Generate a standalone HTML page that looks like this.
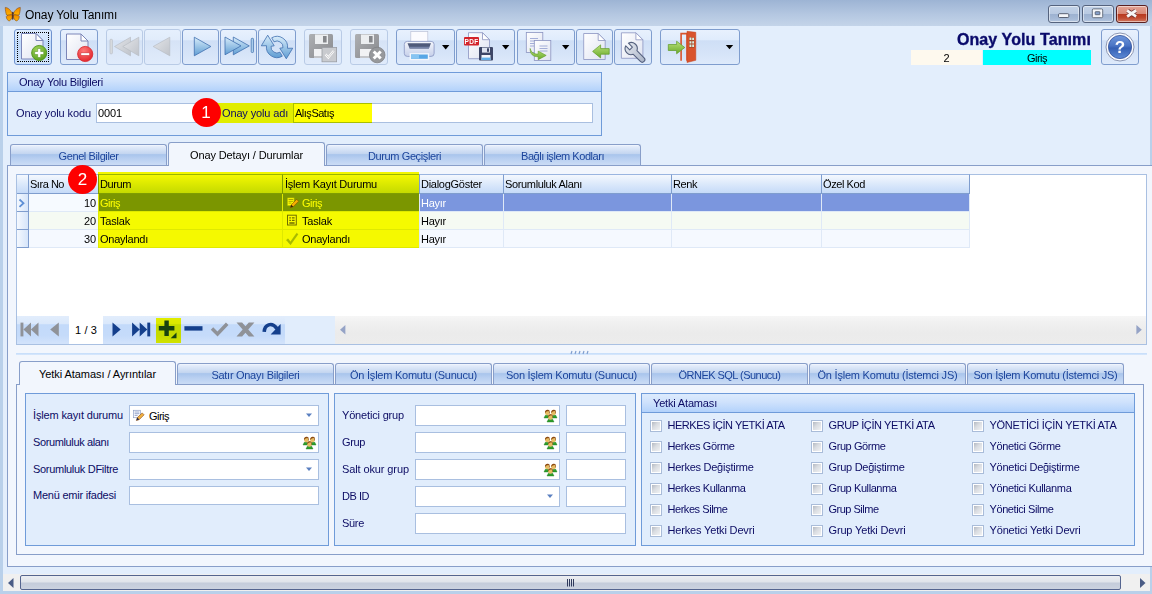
<!DOCTYPE html>
<html lang="tr">
<head>
<meta charset="utf-8">
<title>Onay Yolu Tanımı</title>
<style>
html,body{margin:0;padding:0}
body{width:1152px;height:594px;overflow:hidden;position:relative;background:#e3eefc;font:11px "Liberation Sans",sans-serif;color:#000}
.a{position:absolute;box-sizing:border-box}
.t{position:absolute;white-space:nowrap;line-height:13px;height:13px;letter-spacing:-.3px}
.nv{color:#0c0c64}
.tl{white-space:nowrap}
.bl{color:#1c449b}
/* window frame */
#titlebar{left:0;top:0;width:1152px;height:26px;background:linear-gradient(#9db4d4,#b4c7e1 55%,#c4d4e9)}
#bl{left:0;top:26px;width:3px;height:568px;background:#b9d0ea}
#br{left:1150px;top:26px;width:2px;height:568px;background:#b9d0ea}
#bb{left:0;top:591px;width:1152px;height:3px;background:#b9d0ea}
.wbtn{top:5px;height:18px;border:1px solid #55637e;border-radius:3px;background:linear-gradient(#c3d2e7,#b9cae2 48%,#9db2d1 52%,#a6bad7 80%,#b4c6df);box-shadow:inset 0 0 0 1px rgba(255,255,255,.5)}
/* toolbar buttons */
.tb{top:29px;height:36px;border:1px solid #7f9dce;border-radius:3px;background:linear-gradient(#e8f1fd,#e0ecfc 28%,#cfdff6 32%,#d6e4f8 70%,#deeafb)}
.tb.dis{border-color:#b9cbe6;background:linear-gradient(#e6f0fd,#e1ecfb 28%,#d6e3f6 32%,#dce8f9 70%,#e0ebfb)}
/* group boxes */
.grp{border:1px solid #6f9bd9;background:#e1edfc}
.ghd{left:0;top:0;right:0;height:19px;border-bottom:1px solid #6f9bd9;background:linear-gradient(#ddebfd,#cfe2fc 45%,#b3d2fb)}
.inp{background:#fff;border:1px solid #a9bfe0;height:20px}
/* tabs */
.tab{border:1px solid #889ec9;border-bottom:none;border-radius:3px 3px 0 0;background:linear-gradient(#f4f8fe,#e3ecfa 8%,#c3d5f0 44%,#a9c5ec 48%,#b9d0f1 70%,#cbdcf5);text-align:center;color:#1c449b;line-height:23px;letter-spacing:-.3px}
.tab.act{background:#f2f6fd;color:#000;border-color:#889ec9}
.pnl{border:1px solid #889ec9;background:#f2f6fd}
/* grid */
.hd{top:174px;height:20px;border-right:1px solid #7f9dce;border-bottom:1px solid #7f9dce;border-top:1px solid #9ab5e0;background:linear-gradient(#f4f8fe,#dce9fb 50%,#c5daf8);}
.cell{height:18px;border-right:1px solid #dbe6f5;border-bottom:1px solid #dbe6f5}
.cb{width:12px;height:12px;border:1px solid #a9bcd9;background:linear-gradient(135deg,#a9afb9,#d9dce1 45%,#f6f7f8);box-shadow:inset 0 0 0 1px #fff}
</style>
</head>
<body>
<!-- WINDOW FRAME -->
<div class="a" id="titlebar"></div>
<div class="a" id="bl"></div><div class="a" id="br"></div><div class="a" id="bb"></div>
<span class="t" style="left:25px;top:8px;font-size:12px;line-height:14px;height:14px;letter-spacing:-.1px">Onay Yolu Tanımı</span>
<svg class="a" style="left:0;top:0" width="30" height="26" viewBox="0 0 30 26">
<defs><linearGradient id="gbf" x1="0" y1="0" x2="0" y2="1"><stop offset="0" stop-color="#ef8a00"/><stop offset="1" stop-color="#ffb300"/></linearGradient></defs>
<g fill="url(#gbf)" stroke="#7a3c08" stroke-width=".5">
<path d="M12.300 14C11.200 10.500 8.300 7.600 5.300 7.400C5.200 10 5.800 13 6.500 15C8.500 15.600 10.800 15.300 12.300 14z"/>
<path d="M12.300 15C9.500 14.600 6.800 15.200 6.300 16.500C6.300 19 7.800 20.800 9.300 20.900C11 20.300 12.100 18 12.300 16z"/>
<path d="M13.300 14C14.400 10.500 17.300 7.600 20.300 7.400C20.400 10 19.800 13 19.100 15C17.100 15.600 14.800 15.300 13.300 14z"/>
<path d="M13.300 15C16.100 14.600 18.800 15.200 19.300 16.500C19.300 19 17.800 20.800 16.300 20.900C14.600 20.300 13.500 18 13.300 16z"/>
</g>
<path d="M12.800 12.500v6.500" stroke="#4a2410" stroke-width="1.300" stroke-linecap="round"/>
</svg>
<div class="a wbtn" style="left:1048px;width:32px"></div>
<div class="a wbtn" style="left:1082px;width:32px"></div>
<div class="a wbtn" style="left:1116px;width:32px;background:linear-gradient(#e3a495,#d98876 48%,#b8391f 52%,#c04a30 75%,#d27a62);border-color:#5a2020"></div>
<svg class="a" style="left:1048px;top:5px" width="100" height="18" viewBox="1048 5 100 18">
<rect x="1058.500" y="13.700" width="10.300" height="3.800" rx="1" fill="#f4f6fa" stroke="#4d5566" stroke-width=".9"/>
<rect x="1092.300" y="8.900" width="10.400" height="8.800" rx="1.200" fill="#f4f6fa" stroke="#4d5566" stroke-width=".8"/>
<rect x="1095.200" y="11.700" width="4.700" height="3" rx=".4" fill="#86a0cc" stroke="#4d5566" stroke-width=".8"/>
<path d="M1127.600 10.800l8 5.400m0-5.400l-8 5.400" stroke="#6a3030" stroke-width="4.400"/>
<path d="M1128.300 11.300l6.600 4.400m0-4.400l-6.600 4.400" stroke="#f6f6f6" stroke-width="2.800" stroke-linecap="square"/>
</svg>
<!-- TOOLBAR BUTTONS -->
<div class="a tb" style="left:14px;width:38px;border-color:#6f93cf;background:linear-gradient(#dcebfd,#d4e6fc 28%,#bfd9fa 32%,#c6ddfa 70%,#d0e3fb)"></div>
<div class="a" style="left:17px;top:32px;width:32px;height:30px;border:1px dotted #000"></div>
<div class="a tb" style="left:60px;width:38px"></div>
<div class="a tb dis" style="left:106px;width:37px"></div>
<div class="a tb dis" style="left:144px;width:37px"></div>
<div class="a tb" style="left:182px;width:37px"></div>
<div class="a tb" style="left:220px;width:37px"></div>
<div class="a tb" style="left:258px;width:38px"></div>
<div class="a tb dis" style="left:304px;width:38px"></div>
<div class="a tb dis" style="left:350px;width:38px"></div>
<div class="a tb" style="left:396px;width:59px"></div>
<div class="a tb" style="left:456px;width:59px"></div>
<div class="a tb" style="left:517px;width:58px"></div>
<div class="a tb" style="left:576px;width:37px"></div>
<div class="a tb" style="left:614px;width:38px"></div>
<div class="a tb" style="left:660px;width:80px"></div>
<svg class="a" style="left:0;top:26px" width="760" height="44" viewBox="0 26 760 44">
<defs>
<linearGradient id="gdoc" x1="0" y1="0" x2="1" y2="1"><stop offset="0" stop-color="#ffffff"/><stop offset="1" stop-color="#dfe3f1"/></linearGradient>
<linearGradient id="gtri" x1="0" y1="0" x2="0" y2="1"><stop offset="0" stop-color="#d8ecfa"/><stop offset="1" stop-color="#5f9dd3"/></linearGradient>
<linearGradient id="gtrd" x1="0" y1="0" x2="1" y2="1"><stop offset="0" stop-color="#e4e6ea"/><stop offset="1" stop-color="#bfc3ca"/></linearGradient>
<radialGradient id="ggrn" cx=".4" cy=".3" r=".8"><stop offset="0" stop-color="#a5d65a"/><stop offset="1" stop-color="#4f9a18"/></radialGradient>
<radialGradient id="gred" cx=".4" cy=".3" r=".8"><stop offset="0" stop-color="#ff7a7a"/><stop offset="1" stop-color="#e01d25"/></radialGradient>
<linearGradient id="garr" x1="0" y1="0" x2="0" y2="1"><stop offset="0" stop-color="#b9e17a"/><stop offset="1" stop-color="#6aaa2a"/></linearGradient>
<linearGradient id="gflp" x1="0" y1="0" x2="1" y2="1"><stop offset="0" stop-color="#aeb0b3"/><stop offset="1" stop-color="#88898d"/></linearGradient>
<linearGradient id="gprn" x1="0" y1="0" x2="0" y2="1"><stop offset="0" stop-color="#f4f6fc"/><stop offset="1" stop-color="#c6d0ea"/></linearGradient>
<linearGradient id="gwr" x1="0" y1="0" x2="1" y2="1"><stop offset="0" stop-color="#e6eaf1"/><stop offset="1" stop-color="#a9b3c6"/></linearGradient>
</defs>
<!-- 1 new doc -->
<path d="M21.5 33.5h14.5l7 7v18.500h-21.500z" fill="url(#gdoc)" stroke="#7c86b8"/>
<path d="M36 33.500v7h7z" fill="#fff" stroke="#7c86b8" stroke-linejoin="round"/>
<circle cx="39.200" cy="53" r="7.600" fill="url(#ggrn)" stroke="#4a8f17" stroke-width=".8"/>
<path d="M37.700 48.500h3v3h3v3h-3v3h-3v-3h-3v-3h3z" fill="#fff" stroke="#4d8a1e" stroke-width=".5"/>
<!-- 2 delete doc -->
<path d="M66.500 34h14.500l7 7v18.500h-21.500z" fill="url(#gdoc)" stroke="#7c86b8"/>
<path d="M81 34v7h7z" fill="#fff" stroke="#7c86b8" stroke-linejoin="round"/>
<circle cx="85.200" cy="54" r="7.600" fill="url(#gred)" stroke="#d8242a" stroke-width=".8"/>
<rect x="80.800" y="52.700" width="8.800" height="2.800" rx=".8" fill="#fff" stroke="#c3161d" stroke-width=".5"/>
<!-- 3 first (disabled) -->
<rect x="110" y="39.300" width="2.400" height="14.500" rx=".8" fill="#d9dce1" stroke="#b4b8c0" stroke-width=".6"/>
<path d="M130.500 37.200v18.600l-16-9.300z" fill="url(#gtrd)" stroke="#b4b8c0" stroke-width=".6"/>
<path d="M138.800 37.200v18.600l-16-9.300z" fill="url(#gtrd)" stroke="#b4b8c0" stroke-width=".6"/>
<!-- 4 prev (disabled) -->
<path d="M169.800 37.200v18.600l-16.600-9.300z" fill="url(#gtrd)" stroke="#b4b8c0" stroke-width=".6"/>
<!-- 5 next -->
<path d="M194.300 37.200v18.600l16.600-9.300z" fill="url(#gtri)" stroke="#3f6fae" stroke-width=".8"/>
<!-- 6 last -->
<path d="M233.300 37v17.800l16-8.900z" fill="url(#gtri)" stroke="#3f6fae" stroke-width=".8"/>
<path d="M225 37v17.800l16-8.900z" fill="url(#gtri)" stroke="#3f6fae" stroke-width=".8"/>
<rect x="251.200" y="38.300" width="2.300" height="14.200" rx=".8" fill="#a9cdec" stroke="#3f6fae" stroke-width=".7"/>
<!-- 7 refresh -->
<path d="M261.300 45.800L267.700 35.200L274.200 45.800L271.040 46.270A6 6 0 0 0 280 52.200L282.300 56.200A10.600 10.600 0 0 1 266.480 45.710Z" fill="url(#gtri)" stroke="#3f6fae" stroke-width=".8" stroke-linejoin="round"/>
<path d="M292.700 48.200L286.300 58.800L279.800 48.200L282.960 47.730A6 6 0 0 0 274 41.800L271.700 37.800A10.600 10.600 0 0 1 287.520 48.290Z" fill="url(#gtri)" stroke="#3f6fae" stroke-width=".8" stroke-linejoin="round"/>
<!-- 8 save+check (disabled) -->
<rect x="309" y="34" width="24" height="24" rx="1.500" fill="url(#gflp)"/>
<rect x="315" y="34.500" width="13" height="9.500" fill="#eceef0"/><rect x="323" y="36" width="3.600" height="6.500" fill="#85878b"/>
<rect x="314" y="49" width="15" height="9" fill="#f1f2f4"/><rect x="314" y="56" width="15" height="2" fill="#c4c6ca"/>
<rect x="322" y="47.400" width="14.600" height="14.400" fill="#c9cbcf" stroke="#9a9da3" stroke-width=".8"/>
<path d="M325.500 54.200l2.800 3.300 5.400-6.600" fill="none" stroke="#fff" stroke-width="2.200"/><path d="M325.500 54.200l2.800 3.300 5.400-6.600" fill="none" stroke="#9a9da3" stroke-width=".5"/>
<!-- 9 save+x (disabled) -->
<rect x="355" y="34" width="24" height="24" rx="1.500" fill="url(#gflp)"/>
<rect x="361" y="34.500" width="13" height="9.500" fill="#eceef0"/><rect x="369" y="36" width="3.600" height="6.500" fill="#85878b"/>
<rect x="360" y="49" width="15" height="9" fill="#f1f2f4"/><rect x="360" y="56" width="15" height="2" fill="#c4c6ca"/>
<circle cx="377.200" cy="55" r="7.800" fill="#97999c" stroke="#808285" stroke-width=".8"/>
<path d="M373.700 51.500l7 7m0-7l-7 7" stroke="#fff" stroke-width="3"/>
<!-- 10 printer -->
<rect x="410.800" y="31.600" width="17" height="12" fill="#fbfbfe" stroke="#bcc2d6" stroke-width=".7"/>
<rect x="404.300" y="41.400" width="29.800" height="15" rx="3" fill="url(#gprn)" stroke="#8f9cc6" stroke-width=".9"/>
<path d="M407.500 43.200h23.500l-2.200 5.300h-19.100z" fill="#4f5a7a"/><path d="M409 46.800h20.500l-.7 1.700h-19.100z" fill="#7683a8"/>
<rect x="410.300" y="53.800" width="18.200" height="5.700" fill="#58a7e6" stroke="#f3f6fc" stroke-width="1.400"/>
<rect x="411" y="54.500" width="8" height="4.300" fill="#86c4f2"/>
<path d="M442 45h7.400l-3.700 4.400z" fill="#000"/>
<!-- 11 pdf -->
<path d="M468.500 32.700h14l7 7v19h-21z" fill="url(#gdoc)" stroke="#8a93c0" stroke-width=".8"/>
<path d="M482.500 32.700v7h7z" fill="#fff" stroke="#8a93c0" stroke-width=".8" stroke-linejoin="round"/>
<rect x="464" y="37" width="15" height="8.400" rx="1" fill="#d3232a"/>
<text x="471.500" y="43.900" font-family="Liberation Sans,sans-serif" font-weight="bold" font-size="6.500" fill="#fff" text-anchor="middle" letter-spacing=".3">PDF</text>
<rect x="479" y="47" width="14" height="13.400" rx="1" fill="#3d4666"/>
<rect x="482" y="47.600" width="8" height="5" fill="#dfe4f0"/><rect x="487" y="48.300" width="2" height="3.500" fill="#3d4666"/>
<rect x="481.500" y="55" width="9" height="5" fill="#f4f6fb"/><rect x="481.500" y="57.600" width="9" height="2.400" fill="#62aee8"/>
<path d="M502 45h7.400l-3.700 4.400z" fill="#000"/>
<!-- 12 copy -->
<rect x="526.300" y="32.500" width="16.500" height="20" fill="url(#gdoc)" stroke="#8a93c0" stroke-width=".8"/>
<path d="M530 38.500h8m-8 2.500h8m-8 2.500h8m-8 2.500h4" stroke="#8f9ccf" stroke-width=".8"/>
<rect x="534.300" y="40.500" width="16.500" height="20" fill="url(#gdoc)" stroke="#8a93c0" stroke-width=".8"/>
<path d="M539.500 46h8m-8 2.500h8m-8 2.500h8" stroke="#8f9ccf" stroke-width=".8"/>
<path d="M530.200 48.500c1 4 3.500 5.600 8 5.600v-3l8 4.300-8 4.300v-3c-5 .2-8.400-2.600-8-8.200z" fill="url(#garr)" stroke="#5e9a26" stroke-width=".6" stroke-linejoin="round"/>
<path d="M562 45h7.400l-3.700 4.400z" fill="#000"/>
<!-- 13 import -->
<path d="M583.700 33.500h14.500l7 7v19h-21.500z" fill="url(#gdoc)" stroke="#8a93c0" stroke-width=".8"/>
<path d="M598.200 33.500v7h7z" fill="#fff" stroke="#8a93c0" stroke-width=".8" stroke-linejoin="round"/>
<path d="M592.600 51.400l8-6.500v3.700h8.600v5.600h-8.600v3.700z" fill="url(#garr)" stroke="#5e9a26" stroke-width=".7" stroke-linejoin="round"/>
<!-- 14 wrench -->
<path d="M621.400 32.800h14.500l7 7v18.500h-21.500z" fill="url(#gdoc)" stroke="#8a93c0" stroke-width=".8"/>
<path d="M635.900 32.800v7h7z" fill="#fff" stroke="#8a93c0" stroke-width=".8" stroke-linejoin="round"/>
<path d="M628.44 43.16L632.40 47.12L629.72 49.80L625.76 45.84A6.1 6.1 0 0 0 633.26 54.34L640.39 61.47A2.6 2.6 0 0 0 644.07 57.79L636.94 50.66A6.1 6.1 0 0 0 628.44 43.16Z" fill="url(#gwr)" stroke="#55617f" stroke-width="1.100" stroke-linejoin="round"/>
<!-- 15 exit -->
<path d="M680.300 32.700h7.500v28h-1.600v-26.300h-4.300v26.300h-1.600z" fill="#d9532c"/>
<path d="M687 31.300l8.800 1v28l-8.800 2.200z" fill="#d9532c" stroke="#c2411d" stroke-width=".5"/>
<path d="M689 37l5.300.4v10.300l-5.300.3z" fill="#a84a2c"/>
<path d="M689.500 37.600h1.900v2.300h-1.900zm2.700.1h1.800v2.300h-1.800zm-2.700 3.500h1.900v2.300h-1.900zm2.700 0h1.800v2.300h-1.800zm-2.700 3.400h1.900v2.300h-1.900zm2.700 0h1.800v2.300h-1.800z" fill="#d8f0e0"/>
<path d="M668.300 44.500h8.300v-3.300l8.200 6.300-8.200 6.300v-3.300h-8.300z" fill="url(#garr)" stroke="#5e9a26" stroke-width=".7" stroke-linejoin="round"/>
<path d="M725.800 45.100h7.400l-3.700 4.200z" fill="#000"/>
</svg>
<!-- HEADER RIGHT -->
<span class="t" id="bigtitle" style="right:61px;top:30px;font-size:16px;font-weight:bold;line-height:19px;height:19px;color:#0a0a6b;letter-spacing:.1px;-webkit-text-stroke:.35px #0a0a6b">Onay Yolu Tanımı</span>
<div class="a" style="left:911px;top:50px;width:71px;height:15px;background:#fef9ee"></div>
<div class="a" style="left:983px;top:50px;width:108px;height:15px;background:#00ffff"></div>
<span class="t" style="left:911px;top:52px;width:71px;text-align:center;letter-spacing:-0.12px">2</span>
<span class="t" style="left:983px;top:52px;width:108px;text-align:center;letter-spacing:-0.52px">Giriş</span>
<div class="a tb" style="left:1101px;width:38px"></div>
<svg class="a" style="left:1101px;top:29px" width="38" height="36" viewBox="1101 29 38 36">
<defs><linearGradient id="ghlp" x1="0" y1="0" x2="0" y2="1"><stop offset="0" stop-color="#6f97dc"/><stop offset=".45" stop-color="#4a74c4"/><stop offset=".55" stop-color="#345fb4"/><stop offset="1" stop-color="#5f8cd6"/></linearGradient></defs>
<circle cx="1120" cy="47" r="14" fill="#fdfdff" stroke="#7f8aa8" stroke-width=".9"/>
<circle cx="1120" cy="47" r="11.600" fill="url(#ghlp)" stroke="#35539a" stroke-width=".8"/>
<text x="1120" y="53.200" font-family="Liberation Sans,sans-serif" font-weight="bold" font-size="17" fill="#fff" text-anchor="middle">?</text>
</svg>
<!-- GROUP 1: Onay Yolu Bilgileri -->
<div class="a grp" style="left:7px;top:72px;width:595px;height:64px">
<div class="a ghd"></div>
</div>
<span class="t nv" style="left:19px;top:76px;letter-spacing:-0.25px">Onay Yolu Bilgileri</span>
<span class="t nv" style="left:16px;top:107px;letter-spacing:-0.10px">Onay yolu kodu</span>
<div class="a inp" style="left:96px;top:103px;width:120px"></div>
<span class="t" style="left:98px;top:107px;letter-spacing:-0.12px">0001</span>
<div class="a inp" style="left:293px;top:103px;width:300px"></div>
<div class="a" style="left:206px;top:103px;width:166px;height:20px;background:#ffff00;mix-blend-mode:multiply"></div>
<span class="t nv" style="left:222px;top:107px;letter-spacing:-0.14px">Onay yolu adı</span>
<span class="t" style="left:295px;top:107px;letter-spacing:-0.49px">AlışSatış</span>
<div class="a" style="left:191.500px;top:98px;width:29px;height:29px;border-radius:50%;background:#fe0000"></div>
<span class="t" style="left:191.500px;top:103px;width:29px;text-align:center;color:#fff;font-size:17px;line-height:19px;height:19px;letter-spacing:0">1</span>
<!-- OUTER TAB CONTROL -->
<div class="a pnl" style="left:7px;top:165px;width:1160px;height:402px"></div>
<div class="a tab" style="left:10px;top:144px;width:157px;height:21px"><span class="tl" style="letter-spacing:-0.39px">Genel Bilgiler</span></div>
<div class="a tab act" style="left:168px;top:142px;width:157px;height:24px;line-height:24px"><span class="tl" style="letter-spacing:-0.12px">Onay Detayı / Durumlar</span></div>
<div class="a tab" style="left:326px;top:144px;width:157px;height:21px"><span class="tl" style="letter-spacing:-0.39px">Durum Geçişleri</span></div>
<div class="a tab" style="left:484px;top:144px;width:157px;height:21px"><span class="tl" style="letter-spacing:-0.46px">Bağlı işlem Kodları</span></div>
<!-- GRID -->
<div class="a" style="left:16px;top:174px;width:1131px;height:171px;background:#fff;border:1px solid #a9c0e2"></div>
<div class="a hd" style="left:17px;width:12px"></div>
<div class="a hd" style="left:29px;width:70px"></div>
<div class="a hd" style="left:99px;width:184px"></div>
<div class="a hd" style="left:283px;width:137px"></div>
<div class="a hd" style="left:420px;width:84px"></div>
<div class="a hd" style="left:504px;width:168px"></div>
<div class="a hd" style="left:672px;width:150px"></div>
<div class="a hd" style="left:822px;width:148px"></div>
<span class="t" style="left:30px;top:178px;letter-spacing:-0.47px">Sıra No</span>
<span class="t" style="left:100px;top:178px;letter-spacing:-0.40px">Durum</span>
<span class="t" style="left:285px;top:178px;letter-spacing:-0.26px">İşlem Kayıt Durumu</span>
<span class="t" style="left:421px;top:178px;letter-spacing:-0.27px">DialogGöster</span>
<span class="t" style="left:505px;top:178px;letter-spacing:-0.35px">Sorumluluk Alanı</span>
<span class="t" style="left:673px;top:178px;letter-spacing:-0.42px">Renk</span>
<span class="t" style="left:823px;top:178px;letter-spacing:-0.41px">Özel Kod</span>
<!-- rows -->
<div class="a" style="left:29px;top:194px;width:941px;height:18px;background:#7b96de"></div>
<div class="a" style="left:29px;top:194px;width:70px;height:18px;background:#f6faff"></div>
<div class="a" style="left:29px;top:212px;width:941px;height:18px;background:#f5faf3"></div>
<div class="a" style="left:29px;top:230px;width:941px;height:18px;background:#f5f9ff"></div>
<div class="a" style="left:29px;top:211px;width:941px;height:1px;background:#dfe9f7"></div>
<div class="a" style="left:29px;top:229px;width:941px;height:1px;background:#dfe9f7"></div>
<div class="a" style="left:29px;top:247px;width:941px;height:1px;background:#dfe9f7"></div>
<div class="a" style="left:98px;top:194px;width:1px;height:54px;background:#dfe9f7"></div>
<div class="a" style="left:282px;top:194px;width:1px;height:54px;background:#dfe9f7"></div>
<div class="a" style="left:419px;top:194px;width:1px;height:54px;background:#dfe9f7"></div>
<div class="a" style="left:503px;top:194px;width:1px;height:54px;background:#dfe9f7"></div>
<div class="a" style="left:671px;top:194px;width:1px;height:54px;background:#dfe9f7"></div>
<div class="a" style="left:821px;top:194px;width:1px;height:54px;background:#dfe9f7"></div>
<div class="a" style="left:969px;top:194px;width:1px;height:54px;background:#dfe9f7"></div>
<!-- indicator cells -->
<div class="a" style="left:17px;top:194px;width:12px;height:18px;border-right:1px solid #7f9dce;border-bottom:1px solid #7f9dce;background:linear-gradient(90deg,#f4f8fe,#d6e5fa)"></div>
<div class="a" style="left:17px;top:212px;width:12px;height:18px;border-right:1px solid #7f9dce;border-bottom:1px solid #7f9dce;background:linear-gradient(90deg,#f4f8fe,#d6e5fa)"></div>
<div class="a" style="left:17px;top:230px;width:12px;height:18px;border-right:1px solid #7f9dce;border-bottom:1px solid #7f9dce;background:linear-gradient(90deg,#f4f8fe,#d6e5fa)"></div>
<svg class="a" style="left:17px;top:194px" width="12" height="18" viewBox="0 0 12 18"><path d="M2.500 5.500l4 3.700-4 3.700" fill="none" stroke="#5d8fd6" stroke-width="1.800"/></svg>
<span class="t" style="left:29px;top:197px;width:67px;text-align:right;letter-spacing:-0.12px">10</span>
<span class="t" style="left:29px;top:215px;width:67px;text-align:right;letter-spacing:-0.12px">20</span>
<span class="t" style="left:29px;top:233px;width:67px;text-align:right;letter-spacing:-0.12px">30</span>
<span class="t" style="left:100px;top:197px;color:#fff;letter-spacing:-0.52px">Giriş</span>
<span class="t" style="left:100px;top:215px;letter-spacing:-0.20px">Taslak</span>
<span class="t" style="left:100px;top:233px;letter-spacing:-0.24px">Onaylandı</span>
<span class="t" style="left:302px;top:197px;color:#fff;letter-spacing:-0.52px">Giriş</span>
<span class="t" style="left:302px;top:215px;letter-spacing:-0.20px">Taslak</span>
<span class="t" style="left:302px;top:233px;letter-spacing:-0.24px">Onaylandı</span>
<span class="t" style="left:421px;top:197px;color:#fff;letter-spacing:-0.26px">Hayır</span>
<span class="t" style="left:421px;top:215px;letter-spacing:-0.26px">Hayır</span>
<span class="t" style="left:421px;top:233px;letter-spacing:-0.26px">Hayır</span>
<!-- row icons -->
<svg class="a" style="left:284px;top:194px" width="18" height="54" viewBox="284 194 18 54">
<rect x="287.700" y="198" width="6.300" height="7.400" fill="#fff" stroke="#c9c9b8" stroke-width=".6"/>
<path d="M288.500 199.500h4.800m-4.800 1.800h4.800m-4.800 1.800h3" stroke="#8f8f80" stroke-width=".8"/>
<path d="M290.400 207.600l.9-2.900 5.400-5.300 1.900 1.900-5.400 5.400z" fill="#f7b02c" stroke="#8a4a10" stroke-width=".6" stroke-linejoin="round"/>
<path d="M290.400 207.600l.9-2.900 2 2z" fill="#3a2a10"/>
<rect x="287.500" y="215.200" width="8.800" height="9.800" fill="#fbfbf2" stroke="#6e6e60" stroke-width="1"/>
<path d="M289.300 217.800h1.600m1 0h2.700m-5.300 2.600h1.600m1 0h2.700m-5.300 2.600h5.300" stroke="#6e6e60" stroke-width="1.300"/>
<path d="M286.400 240l1.700-1.200 2.300 3.300 6.200-8.800 1.400.9-7.500 10.600z" fill="#a9bb9c" stroke="#93a888" stroke-width=".4"/>
</svg>
<!-- yellow highlight -->
<div class="a" style="left:98px;top:172px;width:321px;height:76px;background:#ffff00;mix-blend-mode:multiply"></div>
<div class="a" style="left:68px;top:165px;width:29px;height:29px;border-radius:50%;background:#fe0000"></div>
<span class="t" style="left:68px;top:169.500px;width:29px;text-align:center;color:#fff;font-size:17px;line-height:19px;height:19px;letter-spacing:0">2</span>
<!-- NAVIGATOR -->
<div class="a" style="left:17px;top:316px;width:1129px;height:28px;background:linear-gradient(#f6f6f6,#f0f0f0 25%,#ebebeb 60%,#ececec)"></div>
<div class="a" style="left:17px;top:316px;width:318px;height:28px;background:#e1edfc"></div>
<div class="a" style="left:17px;top:316px;width:268px;height:28px;background:linear-gradient(#e2edfc,#dae8fb 28%,#c3dafa 31%,#c5dbfa 70%,#d3e3fb)"></div>
<div class="a" style="left:69px;top:316px;width:34px;height:28px;background:#fff"></div>
<span class="t" style="left:69px;top:324px;width:34px;text-align:center;letter-spacing:0.12px">1 / 3</span>
<div class="a" style="left:156px;top:318px;width:25px;height:25px;background:#ffff00;mix-blend-mode:multiply"></div>
<svg class="a" style="left:17px;top:316px" width="1130" height="28" viewBox="17 316 1130 28">
<g fill="#8f9298"><rect x="20.500" y="322.600" width="2.900" height="13.800"/><path d="M31 322.600v13.800l-7.600-6.900zM38.500 322.600v13.800l-7.600-6.900z"/><path d="M58.800 322.600v13.800l-8.600-6.900z"/></g>
<g fill="#143f8c"><path d="M112.500 322.600v13.800l8.200-6.900z"/><path d="M132.100 322.600v13.800l7.600-6.900zM139.700 322.600v13.800l7.600-6.900z"/><rect x="147.300" y="322.600" width="2.900" height="13.800"/></g>
<path d="M164.400 320.500v5.600h-5.600v4.400h5.600v5.600h4.400v-5.600h5.600v-4.400h-5.600v-5.600z" fill="#17420f"/><path d="M176.500 332.600v5.600h-5.800z" fill="#17420f"/>
<rect x="184.400" y="326.200" width="18.100" height="4.400" fill="#143f8c"/>
<path d="M212 328.600L217.500 334L227.200 323.800" fill="none" stroke="#8f9298" stroke-width="3.500"/>
<path d="M236.500 322.600h5.600L245.450 326.360L248.800 322.600h5.600L248.250 329.500L254.400 336.400h-5.600L245.450 332.640L242.100 336.400h-5.600L242.650 329.500Z" fill="#8f9298"/>
<path d="M264.200 331.800C264.600 325 271.500 321.200 277 328.600" fill="none" stroke="#143f8c" stroke-width="3.600"/><path d="M280.600 323.900v10.600h-10z" fill="#143f8c"/>
<path d="M345.400 325v9.400l-5.400-4.700z" fill="#95a3c6"/>
<path d="M1136.400 325v9.400l5.400-4.700z" fill="#95a3c6"/>
</svg>
<!-- SPLITTER -->
<div class="a" style="left:16px;top:353px;width:1131px;height:2px;background:linear-gradient(#c3dcfa,#d9e8fc)"></div>
<svg class="a" style="left:570px;top:350px" width="24" height="6" viewBox="0 0 24 6"><path d="M2 1l-1 3m5-3l-1 3m5-3l-1 3m5-3l-1 3m5-3l-1 3" stroke="#7f9dce" stroke-width="1.200"/></svg>
<!-- LOWER TAB CONTROL -->
<div class="a pnl" style="left:16px;top:384px;width:1128px;height:171px"></div>
<div class="a tab act" style="left:19px;top:361px;width:157px;height:24px;line-height:25px"><span class="tl" style="letter-spacing:-0.06px">Yetki Ataması / Ayrıntılar</span></div>
<div class="a tab" style="left:177px;top:363px;width:157px;height:21px;line-height:23px"><span class="tl" style="letter-spacing:-0.29px">Satır Onayı Bilgileri</span></div>
<div class="a tab" style="left:335px;top:363px;width:157px;height:21px;line-height:23px"><span class="tl" style="letter-spacing:-0.24px">Ön İşlem Komutu (Sunucu)</span></div>
<div class="a tab" style="left:493px;top:363px;width:157px;height:21px;line-height:23px"><span class="tl" style="letter-spacing:-0.26px">Son İşlem Komutu (Sunucu)</span></div>
<div class="a tab" style="left:651px;top:363px;width:157px;height:21px;line-height:23px"><span class="tl" style="letter-spacing:-0.53px">ÖRNEK SQL (Sunucu)</span></div>
<div class="a tab" style="left:809px;top:363px;width:157px;height:21px;line-height:23px"><span class="tl" style="letter-spacing:-0.22px">Ön İşlem Komutu (İstemci JS)</span></div>
<div class="a tab" style="left:967px;top:363px;width:157px;height:21px;line-height:23px"><span class="tl" style="letter-spacing:-0.24px">Son İşlem Komutu (İstemci JS)</span></div>
<div class="a grp" style="left:25px;top:393px;width:304px;height:153px"></div>
<span class="t nv" style="left:33px;top:409px;letter-spacing:-0.16px">İşlem kayıt durumu</span>
<div class="a inp" style="left:129px;top:405px;width:190px;height:21px"></div>
<span class="t nv" style="left:33px;top:436px;letter-spacing:-0.37px">Sorumluluk alanı</span>
<div class="a inp" style="left:129px;top:432px;width:190px;height:21px"></div>
<span class="t nv" style="left:33px;top:463px;letter-spacing:-0.30px">Sorumluluk DFiltre</span>
<div class="a inp" style="left:129px;top:459px;width:190px;height:21px"></div>
<span class="t nv" style="left:33px;top:489px;letter-spacing:-0.23px">Menü emir ifadesi</span>
<div class="a inp" style="left:129px;top:486px;width:190px;height:19px"></div>
<span class="t" style="left:149px;top:410px;letter-spacing:-0.52px">Giriş</span>
<div class="a grp" style="left:334px;top:393px;width:302px;height:153px"></div>
<span class="t nv" style="left:342px;top:409px;letter-spacing:-0.17px">Yönetici grup</span>
<div class="a inp" style="left:415px;top:405px;width:145px;height:21px"></div>
<div class="a inp" style="left:566px;top:405px;width:60px;height:21px"></div>
<span class="t nv" style="left:342px;top:436px;letter-spacing:-0.37px">Grup</span>
<div class="a inp" style="left:415px;top:432px;width:145px;height:21px"></div>
<div class="a inp" style="left:566px;top:432px;width:60px;height:21px"></div>
<span class="t nv" style="left:342px;top:463px;letter-spacing:-0.11px">Salt okur grup</span>
<div class="a inp" style="left:415px;top:459px;width:145px;height:21px"></div>
<div class="a inp" style="left:566px;top:459px;width:60px;height:21px"></div>
<span class="t nv" style="left:342px;top:490px;letter-spacing:-0.47px">DB ID</span>
<div class="a inp" style="left:415px;top:486px;width:145px;height:21px"></div>
<div class="a inp" style="left:566px;top:486px;width:60px;height:21px"></div>
<span class="t nv" style="left:342px;top:517px;letter-spacing:-0.31px">Süre</span>
<div class="a inp" style="left:415px;top:513px;width:211px;height:21px"></div>
<div class="a grp" style="left:641px;top:393px;width:494px;height:153px"><div class="a ghd" style="height:19px"></div></div>
<span class="t nv" style="left:653px;top:397px;letter-spacing:-0.17px">Yetki Ataması</span>
<div class="a cb" style="left:650px;top:420px"></div>
<span class="t nv" style="left:667.500px;top:418.5px;letter-spacing:-0.48px">HERKES İÇİN YETKİ ATA</span>
<div class="a cb" style="left:650px;top:441px"></div>
<span class="t nv" style="left:667.500px;top:439.5px;letter-spacing:-0.38px">Herkes Görme</span>
<div class="a cb" style="left:650px;top:462px"></div>
<span class="t nv" style="left:667.500px;top:460.5px;letter-spacing:-0.26px">Herkes Değiştirme</span>
<div class="a cb" style="left:650px;top:483px"></div>
<span class="t nv" style="left:667.500px;top:481.5px;letter-spacing:-0.38px">Herkes Kullanma</span>
<div class="a cb" style="left:650px;top:504px"></div>
<span class="t nv" style="left:667.500px;top:502.5px;letter-spacing:-0.45px">Herkes Silme</span>
<div class="a cb" style="left:650px;top:525px"></div>
<span class="t nv" style="left:667.500px;top:523.5px;letter-spacing:-0.16px">Herkes Yetki Devri</span>
<div class="a cb" style="left:811px;top:420px"></div>
<span class="t nv" style="left:828.500px;top:418.5px;letter-spacing:-0.39px">GRUP İÇİN YETKİ ATA</span>
<div class="a cb" style="left:811px;top:441px"></div>
<span class="t nv" style="left:828.500px;top:439.5px;letter-spacing:-0.41px">Grup Görme</span>
<div class="a cb" style="left:811px;top:462px"></div>
<span class="t nv" style="left:828.500px;top:460.5px;letter-spacing:-0.27px">Grup Değiştirme</span>
<div class="a cb" style="left:811px;top:483px"></div>
<span class="t nv" style="left:828.500px;top:481.5px;letter-spacing:-0.41px">Grup Kullanma</span>
<div class="a cb" style="left:811px;top:504px"></div>
<span class="t nv" style="left:828.500px;top:502.5px;letter-spacing:-0.50px">Grup Silme</span>
<div class="a cb" style="left:811px;top:525px"></div>
<span class="t nv" style="left:828.500px;top:523.5px;letter-spacing:-0.16px">Grup Yetki Devri</span>
<div class="a cb" style="left:972px;top:420px"></div>
<span class="t nv" style="left:989.500px;top:418.5px;letter-spacing:-0.30px">YÖNETİCİ İÇİN YETKİ ATA</span>
<div class="a cb" style="left:972px;top:441px"></div>
<span class="t nv" style="left:989.500px;top:439.5px;letter-spacing:-0.34px">Yönetici Görme</span>
<div class="a cb" style="left:972px;top:462px"></div>
<span class="t nv" style="left:989.500px;top:460.5px;letter-spacing:-0.25px">Yönetici Değiştirme</span>
<div class="a cb" style="left:972px;top:483px"></div>
<span class="t nv" style="left:989.500px;top:481.5px;letter-spacing:-0.36px">Yönetici Kullanma</span>
<div class="a cb" style="left:972px;top:504px"></div>
<span class="t nv" style="left:989.500px;top:502.5px;letter-spacing:-0.41px">Yönetici Silme</span>
<div class="a cb" style="left:972px;top:525px"></div>
<span class="t nv" style="left:989.500px;top:523.5px;letter-spacing:-0.16px">Yönetici Yetki Devri</span>
<svg class="a" style="left:0;top:400px" width="640" height="140" viewBox="0 400 640 140">
<path d="M306 413.5h6l-3 3.500z" fill="#5a7fc0"/>
<path d="M306 467.5h6l-3 3.500z" fill="#5a7fc0"/>
<path d="M547 494.5h6l-3 3.500z" fill="#5a7fc0"/>
<g transform="translate(302.9 436.9)"><path d="M.1 8.100l1.300-2.700h3.300l.9 2.700z" fill="#2f9e2c" stroke="#167a16" stroke-width=".4"/><path d="M8 8.100l.9-2.700h3l1.200 2.700z" fill="#2f9e2c" stroke="#167a16" stroke-width=".4"/><ellipse cx="3.4" cy="2.7" rx="2.300" ry="2.700" fill="#e6bc62"/><path d="M1.1 3.3000000000000003c-.6-3.600 3.400-4.600 4.900-1.900c-1.800-.9-3.600-.2-4.900 1.900z" fill="#8a4812"/><path d="M4.4 0.30000000000000027c1.600.6 1.700 2.600 1 4c-.1-1.600-.4-2.800-1-4z" fill="#8a4812"/><ellipse cx="9.6" cy="2.7" rx="2.300" ry="2.700" fill="#e6bc62"/><path d="M7.3 3.3000000000000003c-.6-3.600 3.400-4.600 4.900-1.900c-1.800-.9-3.600-.2-4.900 1.900z" fill="#8a4812"/><path d="M10.6 0.30000000000000027c1.600.6 1.700 2.600 1 4c-.1-1.600-.4-2.800-1-4z" fill="#8a4812"/><path d="M3.100 12.100l1.400-2.800h4.200l1.400 2.800z" fill="#2f9e2c" stroke="#167a16" stroke-width=".4"/><ellipse cx="6.5" cy="7.1" rx="2.300" ry="2.700" fill="#e6bc62"/><path d="M4.2 7.699999999999999c-.6-3.600 3.400-4.600 4.900-1.900c-1.800-.9-3.600-.2-4.900 1.900z" fill="#8a4812"/><path d="M7.5 4.699999999999999c1.600.6 1.700 2.600 1 4c-.1-1.600-.4-2.800-1-4z" fill="#8a4812"/></g>
<g transform="translate(543.9 409.9)"><path d="M.1 8.100l1.300-2.700h3.300l.9 2.700z" fill="#2f9e2c" stroke="#167a16" stroke-width=".4"/><path d="M8 8.100l.9-2.700h3l1.200 2.700z" fill="#2f9e2c" stroke="#167a16" stroke-width=".4"/><ellipse cx="3.4" cy="2.7" rx="2.300" ry="2.700" fill="#e6bc62"/><path d="M1.1 3.3000000000000003c-.6-3.600 3.400-4.600 4.900-1.900c-1.800-.9-3.600-.2-4.900 1.900z" fill="#8a4812"/><path d="M4.4 0.30000000000000027c1.600.6 1.700 2.600 1 4c-.1-1.600-.4-2.800-1-4z" fill="#8a4812"/><ellipse cx="9.6" cy="2.7" rx="2.300" ry="2.700" fill="#e6bc62"/><path d="M7.3 3.3000000000000003c-.6-3.600 3.400-4.600 4.900-1.900c-1.800-.9-3.600-.2-4.900 1.900z" fill="#8a4812"/><path d="M10.6 0.30000000000000027c1.600.6 1.700 2.600 1 4c-.1-1.600-.4-2.800-1-4z" fill="#8a4812"/><path d="M3.100 12.100l1.400-2.800h4.200l1.400 2.800z" fill="#2f9e2c" stroke="#167a16" stroke-width=".4"/><ellipse cx="6.5" cy="7.1" rx="2.300" ry="2.700" fill="#e6bc62"/><path d="M4.2 7.699999999999999c-.6-3.600 3.400-4.600 4.900-1.900c-1.800-.9-3.600-.2-4.900 1.900z" fill="#8a4812"/><path d="M7.5 4.699999999999999c1.600.6 1.700 2.600 1 4c-.1-1.600-.4-2.800-1-4z" fill="#8a4812"/></g>
<g transform="translate(543.9 436.9)"><path d="M.1 8.100l1.300-2.700h3.300l.9 2.700z" fill="#2f9e2c" stroke="#167a16" stroke-width=".4"/><path d="M8 8.100l.9-2.700h3l1.200 2.700z" fill="#2f9e2c" stroke="#167a16" stroke-width=".4"/><ellipse cx="3.4" cy="2.7" rx="2.300" ry="2.700" fill="#e6bc62"/><path d="M1.1 3.3000000000000003c-.6-3.600 3.400-4.600 4.900-1.900c-1.800-.9-3.600-.2-4.900 1.900z" fill="#8a4812"/><path d="M4.4 0.30000000000000027c1.600.6 1.700 2.600 1 4c-.1-1.600-.4-2.800-1-4z" fill="#8a4812"/><ellipse cx="9.6" cy="2.7" rx="2.300" ry="2.700" fill="#e6bc62"/><path d="M7.3 3.3000000000000003c-.6-3.600 3.400-4.600 4.900-1.900c-1.800-.9-3.600-.2-4.900 1.900z" fill="#8a4812"/><path d="M10.6 0.30000000000000027c1.600.6 1.700 2.600 1 4c-.1-1.600-.4-2.800-1-4z" fill="#8a4812"/><path d="M3.100 12.100l1.400-2.800h4.200l1.400 2.800z" fill="#2f9e2c" stroke="#167a16" stroke-width=".4"/><ellipse cx="6.5" cy="7.1" rx="2.300" ry="2.700" fill="#e6bc62"/><path d="M4.2 7.699999999999999c-.6-3.600 3.400-4.600 4.900-1.900c-1.800-.9-3.600-.2-4.900 1.900z" fill="#8a4812"/><path d="M7.5 4.699999999999999c1.600.6 1.700 2.600 1 4c-.1-1.600-.4-2.800-1-4z" fill="#8a4812"/></g>
<g transform="translate(543.9 463.9)"><path d="M.1 8.100l1.300-2.700h3.300l.9 2.700z" fill="#2f9e2c" stroke="#167a16" stroke-width=".4"/><path d="M8 8.100l.9-2.700h3l1.200 2.700z" fill="#2f9e2c" stroke="#167a16" stroke-width=".4"/><ellipse cx="3.4" cy="2.7" rx="2.300" ry="2.700" fill="#e6bc62"/><path d="M1.1 3.3000000000000003c-.6-3.600 3.400-4.600 4.900-1.900c-1.800-.9-3.600-.2-4.900 1.900z" fill="#8a4812"/><path d="M4.4 0.30000000000000027c1.600.6 1.700 2.600 1 4c-.1-1.600-.4-2.800-1-4z" fill="#8a4812"/><ellipse cx="9.6" cy="2.7" rx="2.300" ry="2.700" fill="#e6bc62"/><path d="M7.3 3.3000000000000003c-.6-3.600 3.400-4.600 4.900-1.900c-1.800-.9-3.600-.2-4.900 1.900z" fill="#8a4812"/><path d="M10.6 0.30000000000000027c1.600.6 1.700 2.600 1 4c-.1-1.600-.4-2.800-1-4z" fill="#8a4812"/><path d="M3.100 12.100l1.400-2.800h4.200l1.400 2.800z" fill="#2f9e2c" stroke="#167a16" stroke-width=".4"/><ellipse cx="6.5" cy="7.1" rx="2.300" ry="2.700" fill="#e6bc62"/><path d="M4.2 7.699999999999999c-.6-3.600 3.400-4.600 4.900-1.900c-1.800-.9-3.600-.2-4.900 1.900z" fill="#8a4812"/><path d="M7.5 4.699999999999999c1.600.6 1.700 2.600 1 4c-.1-1.600-.4-2.800-1-4z" fill="#8a4812"/></g>
<rect x="133.400" y="410.300" width="7.200" height="7.400" fill="#fdfdff" stroke="#8fa0c8" stroke-width=".7"/>
<path d="M134.600 412h4.800m-4.800 1.700h4.800m-4.800 1.700h3" stroke="#7f92c0" stroke-width=".8"/>
<path d="M136.400 420.500l.9-2.900 4.900-4.700 1.900 1.900-4.800 4.800z" fill="#f0b040" stroke="#8a4a10" stroke-width=".6" stroke-linejoin="round"/>
<path d="M136.400 420.500l.9-2.900 2 2z" fill="#2a2a4a"/>
</svg>
<!-- H SCROLLBAR -->
<div class="a" style="left:3px;top:574px;width:1147px;height:17px;background:#f0f0f0"></div>
<div class="a" style="left:20px;top:575px;width:1101px;height:15px;border:1px solid #55658f;border-radius:2px;background:linear-gradient(#eceef2,#e0e4ea 46%,#c4ccda 54%,#ccd3df)"></div>
<svg class="a" style="left:3px;top:574px" width="1147" height="17" viewBox="3 574 1147 17"><path d="M13.500 578v10l-5.500-5z" fill="#4a5c86"/><path d="M1140 578v10l5.500-5z" fill="#4a5c86"/><path d="M567.500 579v7.500m2-7.500v7.500m2-7.500v7.500m2-7.500v7.500" stroke="#2f3a5c" stroke-width="1"/></svg>
</body>
</html>
